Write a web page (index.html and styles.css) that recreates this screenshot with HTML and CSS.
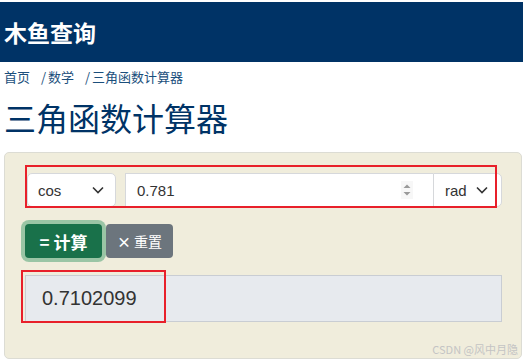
FILE: index.html
```html
<!DOCTYPE html>
<html lang="zh-CN">
<head>
  <meta charset="UTF-8" />
  <meta name="viewport" content="width=device-width, initial-scale=1.0" />
  <title>三角函数计算器 - 木鱼查询</title>
  <link rel="stylesheet" href="styles.css">
</head>
<body>
  <header class="topbar">
    <a class="brand" href="#">木鱼查询</a>
  </header>

  <nav class="crumbs">
    <a href="#">首页</a>
    <span class="sep">/</span><a href="#">数学</a>
    <span class="sep">/</span><a href="#">三角函数计算器</a>
  </nav>

  <h1 class="page-title">三角函数计算器</h1>

  <section class="panel">
    <div class="input-row">
      <div class="field select fn">
        <span>cos</span>
        <svg class="chev" width="14" height="10" viewBox="0 0 14 10"><path d="M2 2.5 7 7.5 12 2.5" fill="none" stroke="#333" stroke-width="1.6"/></svg>
      </div>
      <div class="field number">
        <span>0.781</span>
        <svg class="spin" width="12" height="18" viewBox="0 0 12 18"><path d="M2.5 7 6 3.5 9.5 7Z M2.5 11 6 14.5 9.5 11Z" fill="#9a9a9a"/></svg>
      </div>
      <div class="field select unit">
        <span>rad</span>
        <svg class="chev" width="14" height="10" viewBox="0 0 14 10"><path d="M2 2.5 7 7.5 12 2.5" fill="none" stroke="#333" stroke-width="1.6"/></svg>
      </div>
    </div>

    <div class="actions">
      <button class="btn calc">= 计算</button>
      <button class="btn reset"><b>×</b> 重置</button>
    </div>

    <div class="result">0.7102099</div>
  </section>

  <div class="mark mark-input"></div>
  <div class="mark mark-result"></div>
  <div class="watermark">CSDN @风中月隐</div>
</body>
</html>
```

FILE: styles.css
```css
* {
  box-sizing: border-box;
}

body {
  margin: 0;
  padding-top: 2px;
  background: #fff;
  font-family: 'Liberation Sans', 'Noto Sans CJK SC', Arial, sans-serif;
  color: #212529;
  position: relative;
  height: 362px;
  overflow: hidden;
}

.topbar {
  height: 60px;
  background: #003366;
  display: flex;
  align-items: center;
  padding-left: 4px;
}

.brand {
  color: #fff;
  font-size: 23px;
  font-weight: bold;
  text-decoration: none;
  font-family: 'Noto Sans CJK SC', sans-serif;
}

.crumbs {
  padding: 6px 4px;
  font-size: 13px;
  line-height: 18px;
  font-family: 'Noto Sans CJK SC', sans-serif;
}

.crumbs a {
  color: #1b4f7c;
  text-decoration: none;
}

.crumbs .sep {
  color: #1b4f7c;
  margin: 0 2px 0 8px;
}

.page-title {
  margin: 5px 0 15px 4px;
  font-size: 32px;
  line-height: 40px;
  font-weight: normal;
  color: #003366;
  font-family: 'Noto Sans CJK SC', sans-serif;
}

.panel {
  margin: 0 1px 0 4px;
  height: 207px;
  background: #f0eddc;
  border: 1px solid #dcdcd4;
  border-radius: 5px;
  padding: 20px 19px 0 20px;
}

.input-row {
  display: flex;
  padding-left: 2px;
  height: 34px;
}

.field {
  height: 34px;
  background: #fff;
  border: 1px solid #d6d8db;
  display: flex;
  align-items: center;
  font-size: 15px;
  color: #333;
}

.fn {
  width: 89px;
  border-radius: 5px;
  padding: 0 10px;
  justify-content: space-between;
}

.number {
  width: 308px;
  margin-left: 9px;
  border-right: none;
  padding: 0 20px 0 11px;
  justify-content: space-between;
}

.spin {
  background: #f7f7f7;
}

.unit {
  width: 69px;
  border-radius: 0 5px 5px 0;
  padding: 0 12px 0 11px;
  justify-content: space-between;
}

.actions {
  display: flex;
  margin-top: 17px;
}

.btn {
  height: 34px;
  border: none;
  border-radius: 4px;
  color: #fff;
  font-family: 'Noto Sans CJK SC', sans-serif;
  padding: 0;
}

.calc {
  width: 77px;
  background: #19714a;
  font-size: 17px;
  font-weight: bold;
  box-shadow: 0 0 0 4px #9ac5a5;
}

.reset {
  width: 67px;
  margin-left: 4px;
  background: #6c757d;
  font-size: 14px;
}

.result {
  margin-top: 17px;
  height: 47px;
  background: #e7eaee;
  border: 1px solid #c9cdd3;
  display: flex;
  align-items: center;
  padding-left: 16px;
  font-size: 20px;
  color: #333;
}

.mark {
  position: absolute;
  border: 2px solid #e8202a;
}

.mark-input {
  left: 25px;
  top: 165px;
  width: 472px;
  height: 43px;
}

.mark-result {
  left: 21px;
  top: 270px;
  width: 145px;
  height: 53px;
}

.watermark {
  position: absolute;
  right: 5px;
  bottom: 5px;
  font-size: 11px;
  color: #c4c4c4;
  font-family: 'Noto Sans CJK SC', sans-serif;
}
```
